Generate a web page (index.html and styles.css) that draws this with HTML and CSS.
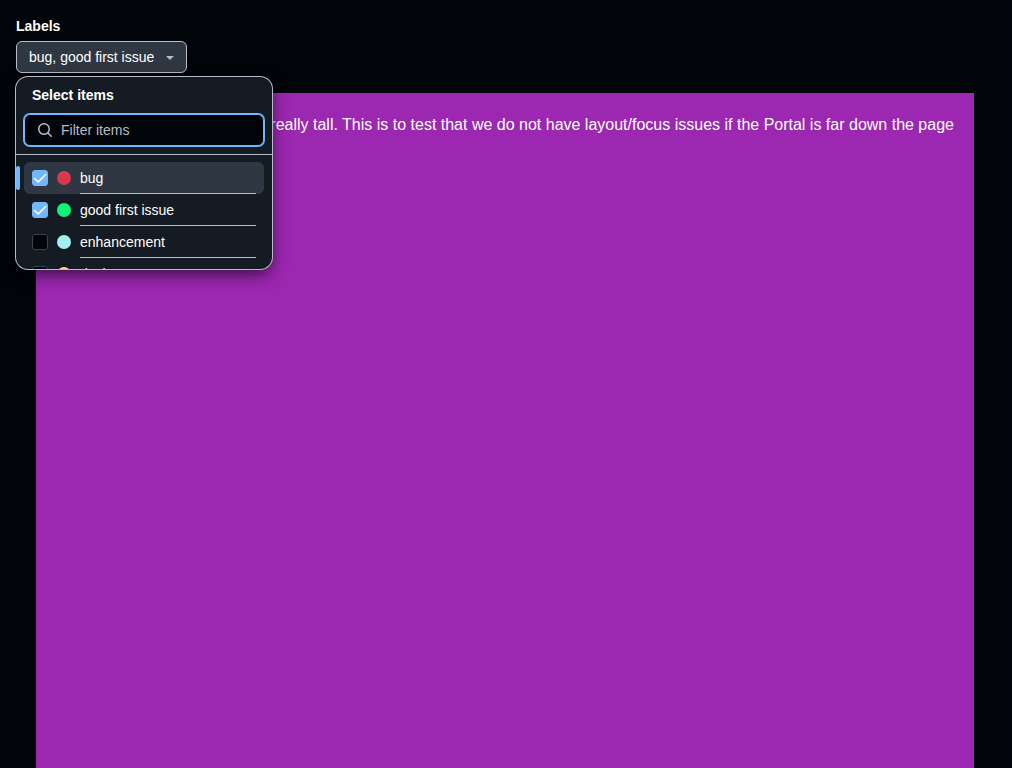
FILE: index.html
```html
<!DOCTYPE html>
<html lang="en">
<head>
<meta charset="utf-8">
<meta name="viewport" content="width=device-width, initial-scale=1">
<title>Select panel</title>
<link rel="stylesheet" href="styles.css">
</head>
<body>
<main class="page">
  <div class="field">
    <span class="field-label" id="labels-label">Labels</span>
    <div class="anchor">
      <button class="select-button" type="button" aria-haspopup="dialog" aria-expanded="true" aria-labelledby="labels-label labels-value">
        <span id="labels-value">bug, good first issue</span>
        <svg class="caret" viewBox="0 0 16 16" aria-hidden="true"><path d="m4.427 7.427 3.396 3.396a.25.25 0 0 0 .354 0l3.396-3.396A.25.25 0 0 0 11.396 7H4.604a.25.25 0 0 0-.177.427Z"/></svg>
      </button>
      <section class="panel" role="dialog" aria-labelledby="panel-title">
        <header class="panel-header">
          <h1 class="panel-title" id="panel-title">Select items</h1>
          <label class="filter">
            <svg class="search-icon" viewBox="0 0 16 16" aria-hidden="true"><path d="M10.68 11.74a6 6 0 0 1-7.922-8.982 6 6 0 0 1 8.982 7.922l3.04 3.04a.749.749 0 0 1-.326 1.275.749.749 0 0 1-.734-.215ZM11.5 7a4.499 4.499 0 1 0-8.997 0A4.499 4.499 0 0 0 11.5 7Z"/></svg>
            <input class="filter-input" type="text" placeholder="Filter items" aria-label="Filter items">
          </label>
        </header>
        <ul class="options">
          <li class="option active">
            <input class="check" type="checkbox" id="opt-bug" checked>
            <span class="dot red"></span>
            <label class="option-label" for="opt-bug">bug</label>
          </li>
          <li class="option">
            <input class="check" type="checkbox" id="opt-first" checked>
            <span class="dot green"></span>
            <label class="option-label" for="opt-first">good first issue</label>
          </li>
          <li class="option">
            <input class="check" type="checkbox" id="opt-enhancement">
            <span class="dot cyan"></span>
            <label class="option-label" for="opt-enhancement">enhancement</label>
          </li>
          <li class="option">
            <input class="check" type="checkbox" id="opt-design">
            <span class="dot yellow"></span>
            <label class="option-label" for="opt-design">design</label>
          </li>
        </ul>
      </section>
    </div>
  </div>
  <div class="tall">This element makes the page really tall. This is to test that we do not have layout/focus issues if the Portal is far down the page</div>
</main>
</body>
</html>
```
FILE: styles.css
```css
:root {
  --canvas: #010409;
  --surface: #151b23;
  --control: #2f3742;
  --border: #b7bdc8;
  --accent: #71b7ff;
}

* {
  box-sizing: border-box;
}

body {
  margin: 0;
  background: var(--canvas);
  color: #fff;
  font: 14px/20px "Liberation Sans", Arial, sans-serif;
}

.page {
  display: flex;
  flex-direction: column;
  align-items: flex-start;
  gap: 20px;
  min-height: 100vh;
  padding: 16px 16px 0;
}

.field {
  display: flex;
  flex-direction: column;
  gap: 5px;
}

.field-label {
  font-weight: 700;
}

.anchor {
  position: relative;
}

.select-button {
  display: flex;
  align-items: center;
  gap: 8px;
  height: 32px;
  padding: 0 8px 0 12px;
  border: 1px solid var(--border);
  border-radius: 6px;
  background: var(--control);
  color: #fff;
  font: inherit;
}

.caret,
.search-icon {
  width: 16px;
  height: 16px;
  fill: var(--border);
}

.panel {
  position: absolute;
  top: 36px;
  left: 0;
  width: 256px;
  height: 192px;
  display: flex;
  flex-direction: column;
  overflow: hidden;
  border-radius: 12px;
  background: var(--surface);
  box-shadow: 0 0 0 1px var(--border), 0 6px 12px -3px #01040966, 0 6px 18px 0 #01040966;
}

.panel-header {
  display: flex;
  flex-direction: column;
  flex: none;
  gap: 9px;
  padding: 8px;
  border-bottom: 1px solid var(--border);
}

.panel-title {
  margin: 0;
  padding: 0 8px;
  font-size: 14px;
  line-height: 20px;
}

.filter {
  display: flex;
  align-items: center;
  gap: 8px;
  height: 32px;
  padding: 0 12px;
  border: 1px solid var(--accent);
  border-radius: 6px;
  box-shadow: 0 0 0 1px var(--accent);
  background: var(--canvas);
}

.filter-input {
  flex: 1;
  min-width: 0;
  padding: 0;
  border: 0;
  outline: 0;
  background: none;
  color: #fff;
  font: inherit;
}

.filter-input::placeholder {
  color: var(--border);
  opacity: 1;
}

.options {
  margin: 0;
  padding: 7px 8px 8px;
  list-style: none;
}

.option {
  position: relative;
  display: flex;
  align-items: center;
  height: 32px;
  padding: 0 8px;
  border-radius: 6px;
}

.option.active {
  background: var(--control);
}

.option.active::before {
  content: "";
  position: absolute;
  top: 4px;
  left: -8px;
  width: 4px;
  height: 24px;
  border-radius: 2px;
  background: var(--accent);
}

.check {
  appearance: none;
  flex: none;
  width: 16px;
  height: 16px;
  margin: 0 9px 0 0;
  border: 1px solid #3d444d;
  border-radius: 3px;
  background: var(--canvas);
}

.check:checked {
  border-color: var(--accent);
  background: var(--accent) url("data:image/svg+xml,%3Csvg xmlns='http://www.w3.org/2000/svg' viewBox='0 0 16 16'%3E%3Cpath d='M2.5 8.5 6.2 12 13.6 4.5' fill='none' stroke='white' stroke-width='1.6' stroke-linecap='round' stroke-linejoin='round'/%3E%3C/svg%3E") center / 16px 16px no-repeat;
}

.dot {
  flex: none;
  width: 14px;
  height: 14px;
  margin-right: 9px;
  border-radius: 50%;
}

.red { background: #d73a4a; }
.green { background: #0cf478; }
.cyan { background: #a2eeef; }
.yellow { background: #ffd78e; }

.option-label {
  flex: 1;
  height: 32px;
  border-bottom: 1px solid var(--border);
  line-height: 32px;
}

.tall {
  flex: 1;
  margin: 0 20px;
  padding: 20px;
  background: #9c27b0;
  font-size: 16px;
  line-height: 24px;
}
```
